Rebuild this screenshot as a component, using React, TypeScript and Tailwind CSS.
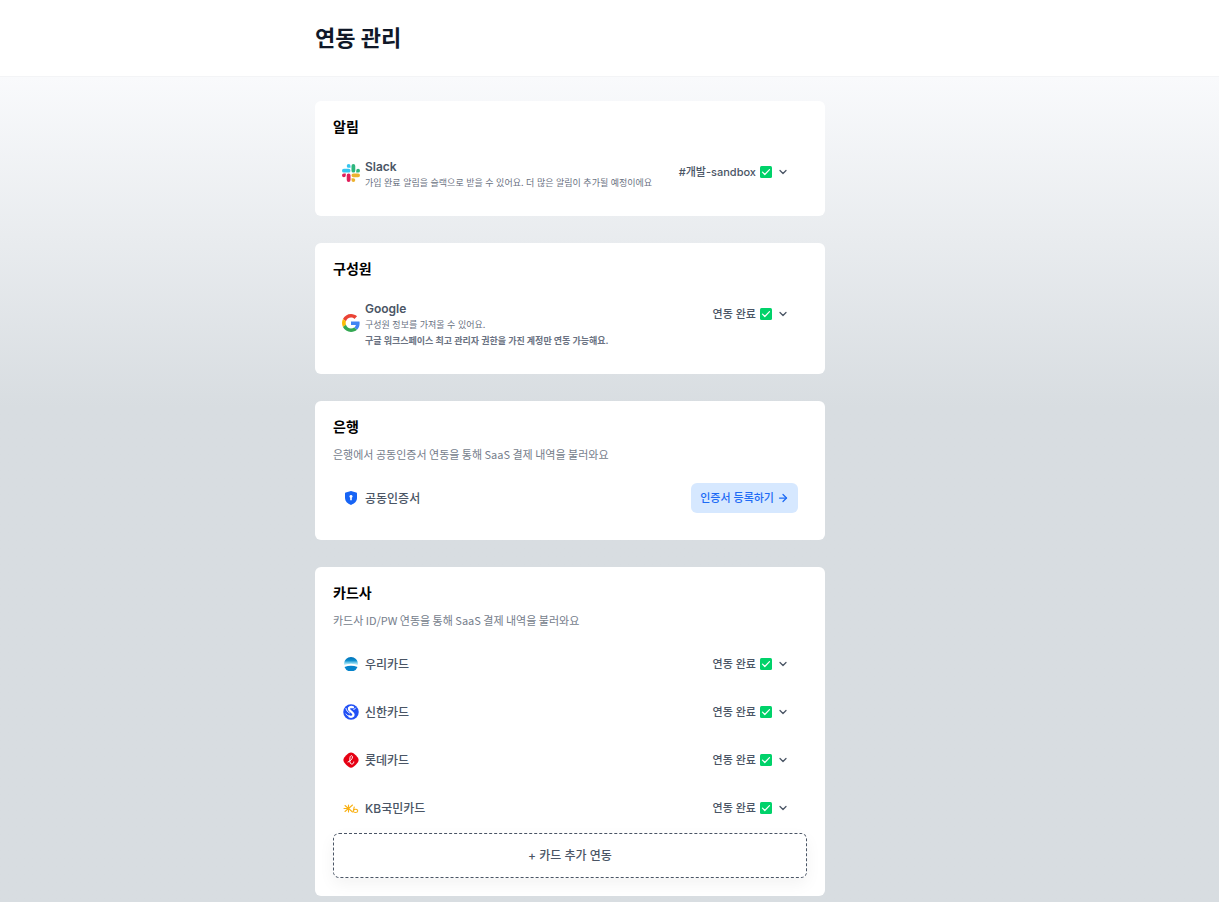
import React from "react";
import { ArrowRight, ChevronDown } from "lucide-react";
import cn from "clsx";

const SlackIcon = () => (
  <svg viewBox="0 0 122.8 122.8" className="size-[18px]" aria-hidden="true">
    <path
      fill="#e01e5a"
      d="M25.8 77.6a12.9 12.9 0 1 1-12.9-12.9h12.9zM32.3 77.6a12.9 12.9 0 0 1 25.8 0v32.3a12.9 12.9 0 0 1-25.8 0z"
    />
    <path
      fill="#36c5f0"
      d="M45.2 25.8a12.9 12.9 0 1 1 12.9-12.9v12.9zM45.2 32.3a12.9 12.9 0 0 1 0 25.8H12.9a12.9 12.9 0 0 1 0-25.8z"
    />
    <path
      fill="#2eb67d"
      d="M97 45.2a12.9 12.9 0 1 1 12.9 12.9H97zM90.5 45.2a12.9 12.9 0 0 1-25.8 0V12.9a12.9 12.9 0 0 1 25.8 0z"
    />
    <path
      fill="#ecb22e"
      d="M77.6 97a12.9 12.9 0 1 1-12.9 12.9V97zM77.6 90.5a12.9 12.9 0 0 1 0-25.8h32.3a12.9 12.9 0 0 1 0 25.8z"
    />
  </svg>
);

const GoogleIcon = () => (
  <svg viewBox="0 0 48 48" className="size-[18px]" aria-hidden="true">
    <path
      fill="#ea4335"
      d="M24 9.5c3.54 0 6.71 1.22 9.21 3.6l6.85-6.85C35.9 2.38 30.47 0 24 0 14.62 0 6.51 5.38 2.56 13.22l7.98 6.19C12.43 13.72 17.74 9.5 24 9.5z"
    />
    <path
      fill="#4285f4"
      d="M46.98 24.55c0-1.57-.15-3.09-.38-4.55H24v9.02h12.94c-.58 2.96-2.26 5.48-4.78 7.18l7.73 6c4.51-4.18 7.09-10.36 7.09-17.65z"
    />
    <path
      fill="#fbbc05"
      d="M10.53 28.59A14.5 14.5 0 0 1 9.77 24c0-1.6.27-3.14.76-4.59l-7.98-6.19A23.9 23.9 0 0 0 0 24c0 3.88.92 7.54 2.56 10.78z"
    />
    <path
      fill="#34a853"
      d="M24 48c6.48 0 11.93-2.13 15.89-5.81l-7.73-6c-2.15 1.45-4.92 2.3-8.16 2.3-6.26 0-11.57-4.22-13.47-9.91l-7.98 6.19C6.51 42.62 14.62 48 24 48z"
    />
  </svg>
);

const ShieldIcon = () => (
  <svg viewBox="0 0 16 16" className="size-4" aria-hidden="true">
    <path
      fill="#1764f5"
      d="M8 1l5.2 1.5a1 1 0 0 1 .8 1v4.6c0 3.2-2.4 5.6-6 6.9-3.6-1.3-6-3.7-6-6.9V3.5a1 1 0 0 1 .8-1z"
    />
    <path
      fill="#fff"
      d="M8 5a1.5 1.5 0 0 1 .8 2.8v2.5H7.2V7.8A1.5 1.5 0 0 1 8 5z"
    />
  </svg>
);

const WooriIcon = () => (
  <svg viewBox="0 0 28 28" className="size-[14px]" aria-hidden="true">
    <defs>
      <linearGradient id="woori-sky" x1="0" y1="0" x2="0" y2="1">
        <stop offset="0" stopColor="#0070b8" />
        <stop offset="0.4" stopColor="#0a8ccc" />
        <stop offset="0.75" stopColor="#8fdaf2" />
        <stop offset="1" stopColor="#ffffff" />
      </linearGradient>
    </defs>
    <path
      fill="url(#woori-sky)"
      d="M0 14a14 14 0 0 1 28 0l-.2 3Q14 10 .2 17z"
    />
    <path fill="#0583cb" d="M1 20Q14 15 27 20A14 14 0 0 1 1 20z" />
  </svg>
);

const ShinhanIcon = () => (
  <svg viewBox="0 0 32 32" className="size-4" aria-hidden="true">
    <circle cx="16" cy="16" r="15.5" fill="#2150f5" />
    <path
      fill="none"
      stroke="#fff"
      strokeWidth="4.6"
      strokeLinecap="round"
      d="M20 6.5c-5-1.5-9 .5-8 4 1 4 9 6.500 9 11 0 3.5-4 5-8 3.500"
    />
    <path
      fill="none"
      stroke="#fff"
      strokeWidth="2"
      strokeLinecap="round"
      d="M6 9c1 4 3 7 7 9M25 8l-3.500 3.500M6 20c1.500 2 3 3.500 6 4"
    />
  </svg>
);

const LotteIcon = () => (
  <svg viewBox="0 0 32 32" className="size-4" aria-hidden="true">
    <path
      fill="#e60013"
      d="M11 2.5q5-3.500 10 0 5 3.500 8.500 8.500 3.500 5 0 10-3.500 5-8.500 8.500-5 3.500-10 0-5-3.500-8.500-8.500-3.500-5 0-10Q6 6 11 2.5z"
    />
    <path
      fill="none"
      stroke="#fff"
      strokeWidth="2"
      strokeLinecap="round"
      d="M10 20c5-2 9-6 9-10.500 0-3-4.500-3-5 1.500-.7 6-1 12.500 3 13 3 .3 4.500-1.500 4.500-4"
    />
  </svg>
);

const KbIcon = () => (
  <svg
    viewBox="0 0 32 32"
    className="size-4"
    fill="none"
    stroke="#f9b115"
    strokeWidth="2.2"
    strokeLinecap="round"
    aria-hidden="true"
  >
    <path d="M2 17h10M11 10v14M4 11l7 6-7 6M19 10l-8 7 8 7" />
    <path d="M22.5 14l-2 8c.5 4 8.500 4 9 0 .3-4-6-4.500-8.500-1" />
  </svg>
);

const CheckMark = () => (
  <svg viewBox="0 0 12 12" className="size-3" aria-hidden="true">
    <rect width="12" height="12" rx="1.5" fill="#00d26a" />
    <path
      d="M2.5 6.2l2.3 2.3 4.7-4.9"
      fill="none"
      stroke="#fff"
      strokeWidth="1.2"
      strokeLinecap="round"
      strokeLinejoin="round"
    />
  </svg>
);

const cards = [
  { id: 1, name: "우리카드", icon: <WooriIcon /> },
  { id: 2, name: "신한카드", icon: <ShinhanIcon /> },
  { id: 3, name: "롯데카드", icon: <LotteIcon /> },
  { id: 4, name: "KB국민카드", icon: <KbIcon /> },
];

type SectionProps = {
  title: string;
  description?: string;
  children: React.ReactNode;
};

const Section = ({ title, description, children }: SectionProps) => (
  <section className="rounded-md bg-white p-[18px]">
    <div className="mb-[11px] flex flex-col gap-2.5">
      <h2 className="pb-0.5 text-sm leading-4 font-bold text-black">{title}</h2>
      {description && (
        <p className="pb-0.5 font-['Noto_Sans_CJK_KR','Inter',sans-serif] text-[11px] leading-[14px] text-[#757d8b]">
          {description}
        </p>
      )}
    </div>
    {children}
  </section>
);

type RowProps = {
  icon: React.ReactNode;
  name: string;
  children?: React.ReactNode;
  action: React.ReactNode;
};

const Row = ({ icon, name, children, action }: RowProps) => (
  <div className="flex items-start justify-between p-[9px]">
    <div className="flex min-h-[30px] items-center gap-[5px]">
      <span className="flex w-[18px] shrink-0 justify-center">{icon}</span>
      <div>
        <h3
          className={cn("text-[12px] leading-[19px] text-gray-600", {
            "font-semibold": children,
            "font-medium": !children,
          })}
        >
          {name}
        </h3>
        {children && (
          <div className="space-y-[3px] text-[9px] leading-[13px] text-gray-500">
            {children}
          </div>
        )}
      </div>
    </div>
    {action}
  </div>
);

const StatusButton = ({ label = "연동 완료" }: { label?: string }) => (
  <button
    type="button"
    className="flex h-[30px] shrink-0 cursor-pointer items-center gap-1 pr-[9px] text-[11px] font-medium text-gray-600"
  >
    {label}
    <CheckMark />
    <ChevronDown className="ml-px size-3" strokeWidth={2.5} />
  </button>
);

export default function App() {
  return (
    <div className="flex min-h-screen flex-col bg-[#d8dde1] font-['Inter','Noto_Sans_CJK_KR',sans-serif]">
      <header className="border-b border-gray-100 bg-white px-4 py-[22px]">
        <div className="mx-auto max-w-[589px]">
          <h1 className="text-[22px] leading-8 font-bold text-gray-900">
            연동 관리
          </h1>
        </div>
      </header>

      <main className="grow bg-linear-to-b from-[#f9fafc] to-[#d8dde1] to-[330px] px-4 pt-6 pb-1.5">
        <div className="mx-auto max-w-[589px]">
          <div className="flex max-w-[510px] flex-col gap-[27px]">
            <Section title="알림">
              <Row
                icon={<SlackIcon />}
                name="Slack"
                action={<StatusButton label="#개발-sandbox" />}
              >
                <p>
                  가입 완료 알림을 슬랙으로 받을 수 있어요. 더 많은 알림이 추가될
                  예정이에요
                </p>
              </Row>
            </Section>

            <Section title="구성원">
              <Row
                icon={<GoogleIcon />}
                name="Google"
                action={<StatusButton />}
              >
                <p>구성원 정보를 가져올 수 있어요.</p>
                <p className="font-bold">
                  구글 워크스페이스 최고 관리자 권한을 가진 계정만 연동
                  가능해요.
                </p>
              </Row>
            </Section>

            <Section
              title="은행"
              description="은행에서 공동인증서 연동을 통해 SaaS 결제 내역을 불러와요"
            >
              <Row
                icon={<ShieldIcon />}
                name="공동인증서"
                action={
                  <button
                    type="button"
                    className="flex h-[30px] shrink-0 cursor-pointer items-center gap-[3px] rounded-md bg-[#d6e8ff] px-[9px] text-[11px] font-medium text-[#1d6bf5]"
                  >
                    인증서 등록하기
                    <ArrowRight className="size-3" strokeWidth={2.5} />
                  </button>
                }
              />
            </Section>

            <Section
              title="카드사"
              description="카드사 ID/PW 연동을 통해 SaaS 결제 내역을 불러와요"
            >
              {cards.map((card) => (
                <Row
                  key={card.id}
                  icon={card.icon}
                  name={card.name}
                  action={<StatusButton />}
                />
              ))}
              <button
                type="button"
                className="mt-px h-[45px] w-full cursor-pointer rounded-md border border-dashed border-gray-600 bg-white text-[12px] font-medium text-gray-600 shadow-[0_6px_16px_rgba(0,0,0,0.05)]"
              >
                + 카드 추가 연동
              </button>
            </Section>
          </div>
        </div>
      </main>
    </div>
  );
}
